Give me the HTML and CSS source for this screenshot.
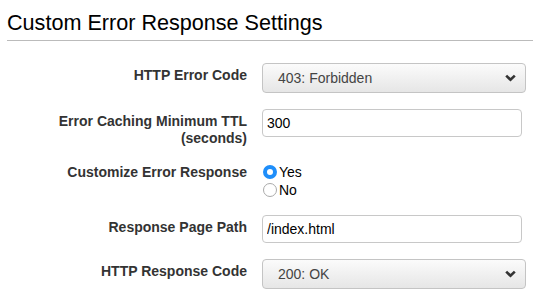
FILE: index.html
```html
<!DOCTYPE html>
<html lang="en">
<head>
    <meta charset="UTF-8">
    <meta name="viewport" content="width=device-width, initial-scale=1.0">
    <title>Custom Error Response Settings</title>
    <link rel="stylesheet" href="styles.css">
</head>
<body>
    <div class="panel">
        <h2 class="panel-title">Custom Error Response Settings</h2>
        <div class="form">
            <div class="row">
                <label class="row-label" for="error-code">HTTP Error Code</label>
                <div class="select">
                    <span id="error-code">403: Forbidden</span>
                    <svg class="chevron" width="11" height="8" viewBox="0 0 11 8"><path d="M1.2 1.6 L5.5 5.8 L9.8 1.6" fill="none" stroke="#333" stroke-width="2.6"/></svg>
                </div>
            </div>
            <div class="row">
                <label class="row-label" for="ttl">Error Caching Minimum TTL (seconds)</label>
                <input type="text" id="ttl" class="text-input" value="300">
            </div>
            <div class="row row-radio">
                <span class="row-label">Customize Error Response</span>
                <div class="radios">
                    <label class="radio"><input type="radio" name="customize" checked> Yes</label>
                    <label class="radio"><input type="radio" name="customize"> No</label>
                </div>
            </div>
            <div class="row">
                <label class="row-label" for="path">Response Page Path</label>
                <input type="text" id="path" class="text-input" value="/index.html">
            </div>
            <div class="row">
                <label class="row-label" for="response-code">HTTP Response Code</label>
                <div class="select">
                    <span id="response-code">200: OK</span>
                    <svg class="chevron" width="11" height="8" viewBox="0 0 11 8"><path d="M1.2 1.6 L5.5 5.8 L9.8 1.6" fill="none" stroke="#333" stroke-width="2.6"/></svg>
                </div>
            </div>
        </div>
    </div>
</body>
</html>
```

FILE: styles.css
```css
body {
    margin: 0;
    font-family: "Liberation Sans", Arial, sans-serif;
    background-color: #fff;
    color: #000;
}
.panel {
    padding-left: 7px;
}
.panel-title {
    margin: 0;
    padding: 10px 0 4px;
    font-size: 21.6px;
    font-weight: normal;
    line-height: 26px;
    border-bottom: 1px solid #bbb;
}
.form {
    padding: 22px 7px 0 0;
}
.row {
    display: grid;
    grid-template-columns: 240px 264px;
    column-gap: 15px;
    align-items: start;
    margin-bottom: 16px;
}
.row-label {
    padding-top: 4px;
    font-size: 14px;
    font-weight: bold;
    line-height: 17px;
    color: #333;
    text-align: right;
}
.select {
    display: flex;
    align-items: center;
    justify-content: space-between;
    box-sizing: border-box;
    height: 30px;
    padding: 0 9px 0 15px;
    font-size: 14px;
    color: #444;
    background: linear-gradient(#fbfbfb, #e6e6e6);
    border: 1px solid #c4c4c4;
    border-radius: 4px;
}
.text-input {
    box-sizing: border-box;
    width: 260px;
    height: 28px;
    margin: 0;
    padding: 0 4px;
    font-family: inherit;
    font-size: 14px;
    color: #000;
    border: 1px solid #c8c8c8;
    border-radius: 4px;
    outline: none;
}
.row-radio .row-label {
    padding-top: 1px;
}
.radios {
    display: flex;
    flex-direction: column;
}
.radio {
    display: flex;
    align-items: center;
    height: 18px;
    font-size: 14px;
}
.radio input {
    appearance: none;
    box-sizing: border-box;
    width: 14px;
    height: 14px;
    margin: 0 2px 0 1px;
    border: 1px solid #aaa;
    border-radius: 50%;
    background: #fff;
}
.radio input:checked {
    border: 4.5px solid #1f8efa;
    background: #fff;
}
```
